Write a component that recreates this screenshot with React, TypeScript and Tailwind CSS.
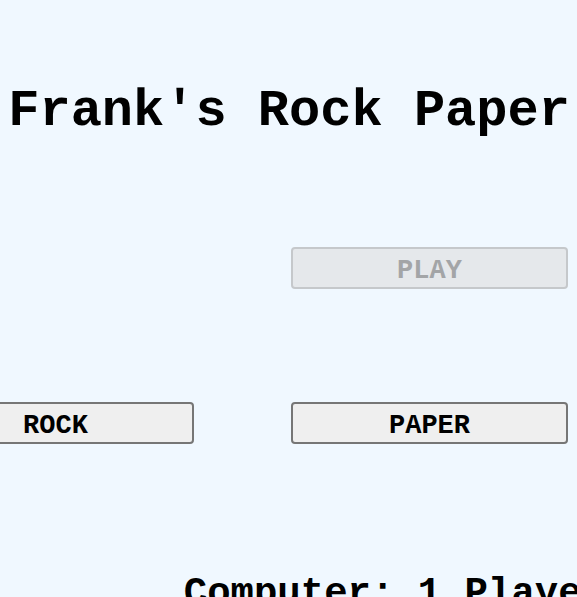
import React from "react";

const mono = { fontFamily: '"Courier New", "Liberation Mono", monospace' };

export default function App() {
  const btn =
    "h-[42px] w-[277px] rounded-[4px] border-2 border-[#767676] bg-[#efefef] pt-[6px] text-[27px] font-bold text-black flex items-center justify-center";
  return (
    <div className="min-h-[597px] w-full overflow-hidden bg-[#f0f8ff]" style={mono}>
      <div className="flex w-[859px] flex-col items-center">
        <h1 className="mt-[86px] whitespace-nowrap text-center text-[52px] font-bold leading-[52px] text-black">
          Frank's Rock Paper Scissors
        </h1>
        <div className="mt-[109px] grid shrink-0 grid-cols-[277px_277px_277px] gap-x-[97px] gap-y-[113px]">
          <div />
          <button
            disabled
            className="flex h-[42px] w-[277px] items-center justify-center rounded-[4px] border-2 border-[#c5c8cb] bg-[#e5e8eb] pt-[6px] text-[27px] font-bold text-[#a3a5a7]"
          >
            PLAY
          </button>
          <div />
          <button className={btn}>ROCK</button>
          <button className={btn}>PAPER</button>
          <button className={btn}>SCISSORS</button>
        </div>
        <div className="mt-[131px] whitespace-nowrap text-center text-[39px] font-bold leading-[39px] text-black">
          Computer: 1 Player: 0
        </div>
      </div>
    </div>
  );
}
